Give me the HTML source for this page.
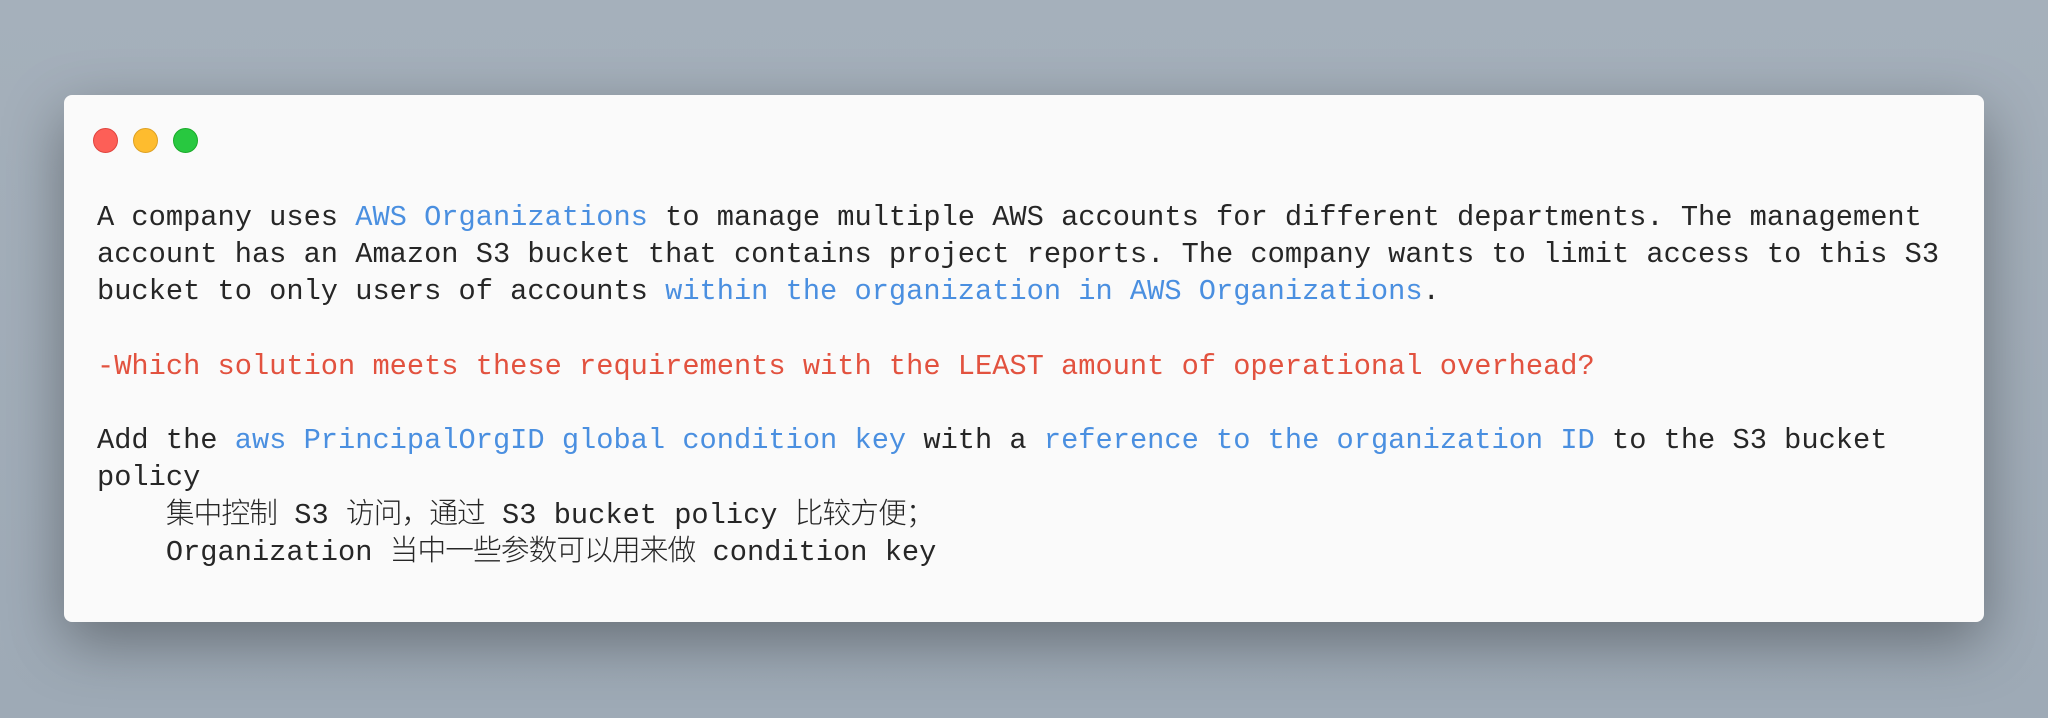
<!DOCTYPE html>
<html><head><meta charset="utf-8"><style>
html,body{margin:0;padding:0;}
body{width:2048px;height:718px;background:linear-gradient(180deg,#a5b0bb,#9eaab6);position:relative;overflow:hidden;}
.win{position:absolute;left:64px;top:95px;width:1920px;height:527px;background:#fafafa;border-radius:8px;box-shadow:0 20px 60px rgba(0,0,0,0.35);}
.dot{position:absolute;top:128px;width:25px;height:25px;border-radius:50%;}
.t{position:absolute;left:97px;top:199px;font-family:"Liberation Mono","Noto Sans CJK SC",monospace;font-size:28.7px;line-height:37.2px;color:#262626;white-space:pre;}
.b{color:#4a8fe0}.r{color:#e2523f}
.c{letter-spacing:-0.9px;font-weight:300}
</style></head><body>
<div class="win"></div>
<div class="dot" style="left:93px;background:#fd5f57;border:1px solid #e0443e;width:23px;height:23px"></div>
<div class="dot" style="left:133px;background:#febc2e;border:1px solid #dea123;width:23px;height:23px"></div>
<div class="dot" style="left:173px;background:#28c840;border:1px solid #1aab29;width:23px;height:23px"></div>
<div class="t">A company uses <span class="b">AWS Organizations</span> to manage multiple AWS accounts for different departments. The management
account has an Amazon S3 bucket that contains project reports. The company wants to limit access to this S3
bucket to only users of accounts <span class="b">within the organization in AWS Organizations</span>.

<span class="r">-Which solution meets these requirements with the LEAST amount of operational overhead?</span>

Add the <span class="b">aws PrincipalOrgID global condition key</span> with a <span class="b">reference to the organization ID</span> to the S3 bucket
policy
    <span class="c">集中控制</span> S3 <span class="c">访问，通过</span> S3 bucket policy <span class="c">比较方便；</span>
    Organization <span class="c">当中一些参数可以用来做</span> condition key</div>
</body></html>
